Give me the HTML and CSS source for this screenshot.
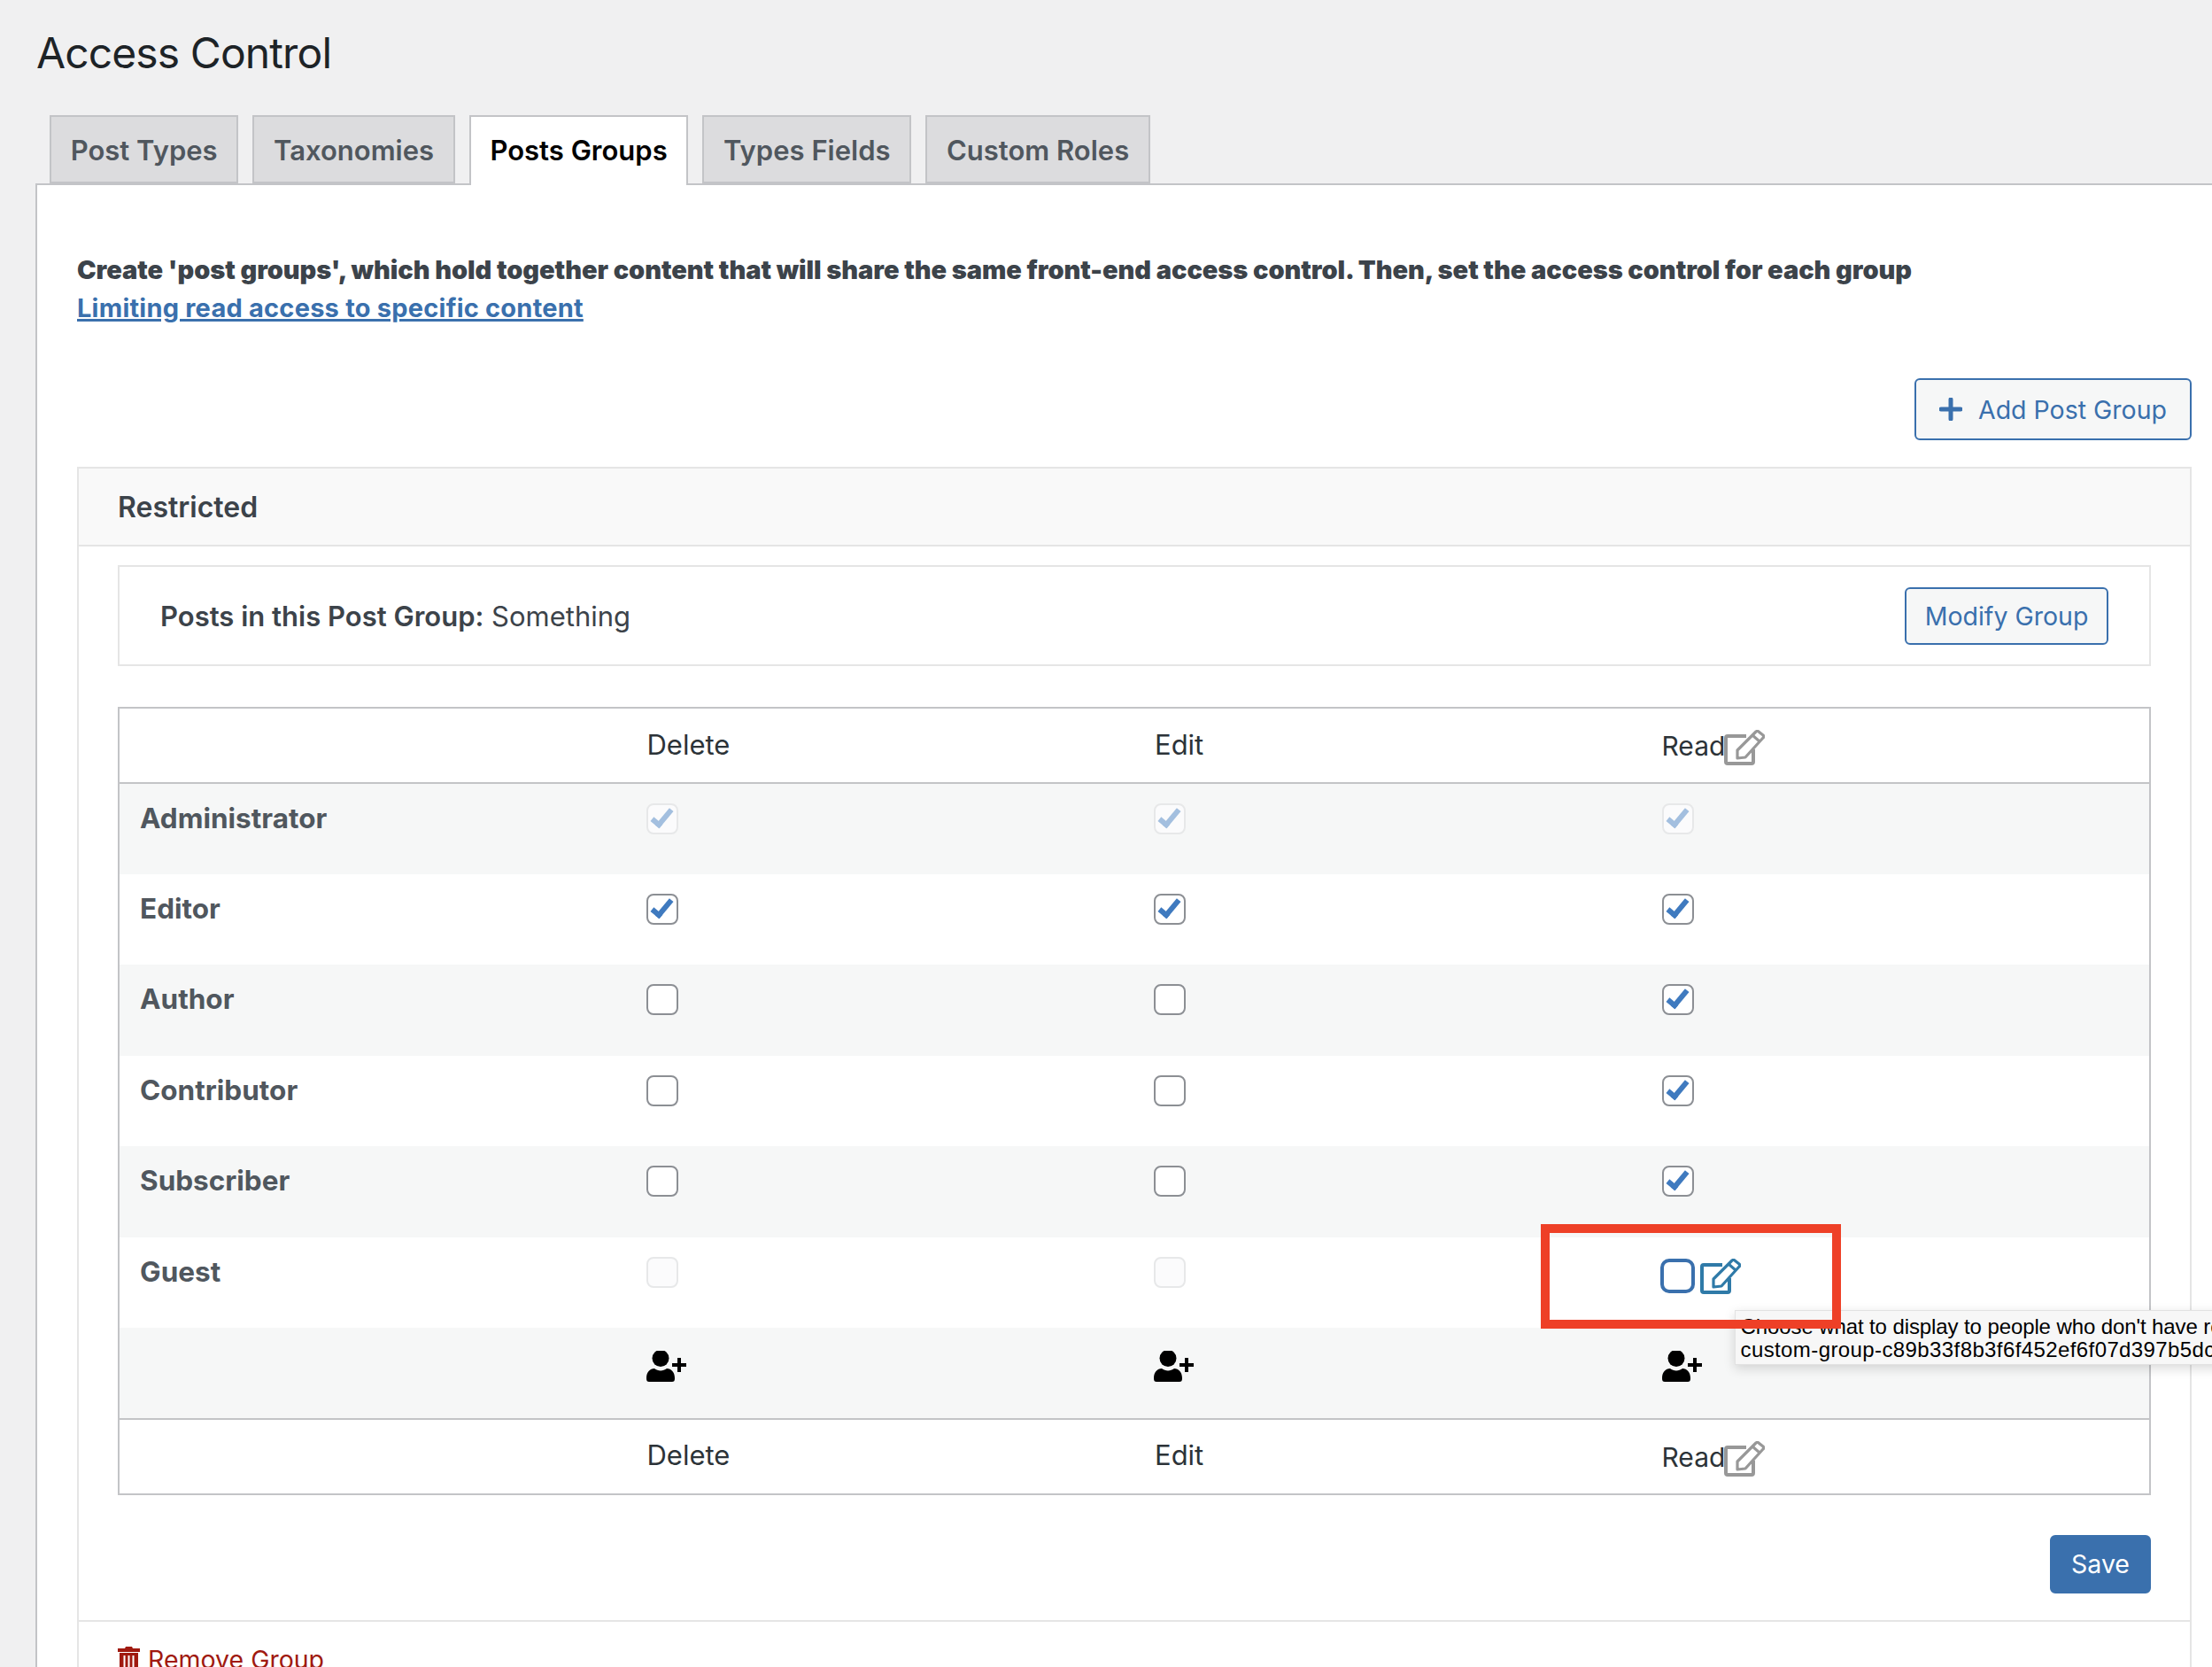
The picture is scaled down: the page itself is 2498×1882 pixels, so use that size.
FILE: index.html
```html
<!DOCTYPE html>
<html lang="en">

<head>
    <meta charset="UTF-8">
    <title>Access Control</title>
    <link rel="stylesheet" href="styles.css">
</head>

<body>
    <svg class="icon-defs" width="0" height="0">
        <symbol id="pencil" viewBox="0 0 46 40">
            <path d="M25 7H4a2 2 0 0 0-2 2v27a2 2 0 0 0 2 2h27a2 2 0 0 0 2-2V22" fill="none" stroke="currentColor" stroke-width="4" />
            <path d="M39 2l5 4a2 2 0 0 1 0 3L24 31l-9 1 0-9L36 2a2 2 0 0 1 3 0z" fill="none" stroke="currentColor" stroke-width="3.200" stroke-linejoin="round" />
            <path d="M32 6l8 7" stroke="currentColor" stroke-width="3" />
        </symbol>
        <symbol id="user-plus" viewBox="0 0 45 36">
            <circle cx="16" cy="8.500" r="9.500" fill="currentColor" />
            <path d="M0 31c0-7 4-11 9-11 2 1.500 4.500 2.500 7 2.500s5-1 7-2.500c5 0 9 4 9 11 0 3-1 4-3 4H3c-2 0-3-1-3-4z" fill="currentColor" />
            <path d="M37 8v16M29 16h16" stroke="currentColor" stroke-width="4" />
        </symbol>
    </svg>

    <h1>Access Control</h1>

    <div class="tabs">
        <a class="tab">Post Types</a>
        <a class="tab">Taxonomies</a>
        <a class="tab active">Posts Groups</a>
        <a class="tab">Types Fields</a>
        <a class="tab">Custom Roles</a>
    </div>

    <div class="panel">
        <p class="intro">
            <strong>Create 'post groups', which hold together content that will share the same front-end access control. Then, set the access control for each group</strong><br>
            <a class="doc-link" href="#">Limiting read access to specific content</a>
        </p>

        <div class="add-row">
            <button class="btn">
                <svg class="plus" viewBox="0 0 26 26" width="26" height="26"><path d="M13 2v22M2 13h22" stroke="currentColor" stroke-width="5" stroke-linecap="round" /></svg>
                Add Post Group
            </button>
        </div>

        <div class="group">
            <div class="group-title">Restricted</div>
            <div class="group-body">
                <div class="posts-box">
                    <span><strong>Posts in this Post Group:</strong> Something</span>
                    <button class="btn">Modify Group</button>
                </div>

                <table class="roles">
                    <thead>
                        <tr>
                            <th></th>
                            <th>Delete</th>
                            <th>Edit</th>
                            <th><span class="read">Read<svg class="pencil"><use href="#pencil" /></svg></span></th>
                        </tr>
                    </thead>
                    <tbody>
                        <tr>
                            <td class="role">Administrator</td>
                            <td><span class="check on off"></span></td>
                            <td><span class="check on off"></span></td>
                            <td><span class="check on off"></span></td>
                        </tr>
                        <tr>
                            <td class="role">Editor</td>
                            <td><span class="check on"></span></td>
                            <td><span class="check on"></span></td>
                            <td><span class="check on"></span></td>
                        </tr>
                        <tr>
                            <td class="role">Author</td>
                            <td><span class="check"></span></td>
                            <td><span class="check"></span></td>
                            <td><span class="check on"></span></td>
                        </tr>
                        <tr>
                            <td class="role">Contributor</td>
                            <td><span class="check"></span></td>
                            <td><span class="check"></span></td>
                            <td><span class="check on"></span></td>
                        </tr>
                        <tr>
                            <td class="role">Subscriber</td>
                            <td><span class="check"></span></td>
                            <td><span class="check"></span></td>
                            <td><span class="check on"></span></td>
                        </tr>
                        <tr>
                            <td class="role">Guest</td>
                            <td><span class="check off"></span></td>
                            <td><span class="check off"></span></td>
                            <td>
                                <span class="guest-read">
                                    <span class="check focus"></span>
                                    <svg class="pencil blue"><use href="#pencil" /></svg>
                                </span>
                                <span class="highlight"></span>
                                <div class="tooltip">Choose what to display to people who don't have read access<br><span class="tooltip-id">custom-group-c89b33f8b3f6f452ef6f07d397b5dc</span></div>
                            </td>
                        </tr>
                        <tr>
                            <td></td>
                            <td><svg class="user-plus"><use href="#user-plus" /></svg></td>
                            <td><svg class="user-plus"><use href="#user-plus" /></svg></td>
                            <td><svg class="user-plus"><use href="#user-plus" /></svg></td>
                        </tr>
                    </tbody>
                    <tfoot>
                        <tr>
                            <th></th>
                            <th>Delete</th>
                            <th>Edit</th>
                            <th><span class="read">Read<svg class="pencil"><use href="#pencil" /></svg></span></th>
                        </tr>
                    </tfoot>
                </table>

                <div class="save-row">
                    <button class="btn primary">Save</button>
                </div>
            </div>
            <div class="group-footer">
                <a class="remove" href="#">
                    <svg class="trash" viewBox="0 0 25 28" width="25" height="28">
                        <path d="M9 0h7l1 2h8v4H0V2h8z" fill="currentColor" />
                        <path d="M2 7h21v21H2z" fill="currentColor" />
                        <path d="M7.500 10v18M12.500 10v18M17.500 10v18" stroke="#fff" stroke-width="2" />
                    </svg>
                    Remove Group
                </a>
            </div>
        </div>
    </div>
</body>

</html>
```

FILE: styles.css
```css
html {
    height: 1882px;
    overflow: hidden;
}

body {
    font-family: Inter, "Liberation Sans", sans-serif;
    font-size: 29px;
    color: #3c434a;
    background-color: #f0f0f1;
    margin: 0;
}

.icon-defs {
    position: absolute;
}

h1 {
    font-size: 48px;
    font-weight: 400;
    line-height: 60px;
    color: #1d2327;
    margin: 0;
    padding: 30px 0 0 41px;
    height: 100px;
    box-sizing: border-box;
    letter-spacing: -0.9px;
}

.tabs {
    display: flex;
    gap: 16px;
    margin-top: 30px;
    padding-left: 56px;
    height: 77px;
}

.tab {
    font-size: 31px;
    font-weight: 600;
    line-height: 75px;
    padding: 0 21.700px;
    height: 77px;
    box-sizing: border-box;
    color: #50575e;
    background: #dcdcde;
    border: 2px solid #c3c4c7;
}

.tab.active {
    color: #000;
    background: #fff;
    border-bottom: none;
    height: 79px;
    position: relative;
    z-index: 1;
}

.panel {
    background: #fff;
    margin-left: 40px;
    border-top: 2px solid #c3c4c7;
    border-left: 2px solid #c3c4c7;
    padding: 0 23px 0 45px;
    height: 1700px;
}

.intro {
    margin: 74px 0 0;
    line-height: 43px;
    font-weight: 700;
    letter-spacing: -0.06px;
}

.doc-link {
    color: #3a70ad;
    text-decoration: underline;
    text-decoration-thickness: 3px;
    letter-spacing: 0.22px;
}

.add-row {
    display: flex;
    justify-content: flex-end;
    margin-top: 58px;
}

.btn {
    font-family: inherit;
    font-size: 28.500px;
    color: #3a70ad;
    background: #f6f7f7;
    border: 2px solid #3a70ad;
    border-radius: 6px;
    padding: 0;
    width: 230px;
    height: 65px;
    cursor: pointer;
}

.add-row .btn {
    height: 70px;
    width: 313px;
    display: flex;
    align-items: center;
    justify-content: center;
    gap: 18px;
}

.group {
    margin-top: 30px;
    border: 2px solid #e5e5e5;
}

.group-title {
    height: 86px;
    line-height: 88px;
    padding-left: 44px;
    font-size: 32px;
    font-weight: 600;
    color: #3c434a;
    background: #f9f9f9;
    border-bottom: 2px solid #e5e5e5;
}

.group-body {
    padding: 21px 44px 30px;
}

.posts-box {
    display: flex;
    justify-content: space-between;
    align-items: center;
    height: 114px;
    box-sizing: border-box;
    padding: 0 46px;
    border: 2px solid #e5e5e5;
    font-size: 31px;
}

.posts-box strong {
    font-weight: 600;
}

.roles {
    width: 100%;
    table-layout: fixed;
    border-collapse: collapse;
    margin-top: 46px;
    border: 2px solid #c3c4c7;
}

.roles th {
    font-size: 31px;
    font-weight: 400;
    text-align: left;
    color: #2c3338;
    height: 85px;
    padding: 0 22px 3px 23px;
    box-sizing: border-box;
}

.roles th .read {
    margin: 4px 0 0 -1px;
    font-size: 30px;
}

.roles thead th {
    border-bottom: 2px solid #c3c4c7;
}

.roles tfoot th {
    border-top: 2px solid #c3c4c7;
}

.roles td {
    height: 102.500px;
    box-sizing: border-box;
    padding: 22px 22px 0;
    vertical-align: top;
    position: relative;
}

.roles tbody tr:nth-child(odd) {
    background: #f6f7f7;
}

.roles td.role {
    font-size: 31.500px;
    font-weight: 700;
    color: #50575e;
    line-height: 34px;
    padding-left: 23px;
}

.read {
    display: inline-flex;
    align-items: center;
    height: 40px;
}

.pencil {
    width: 46px;
    height: 40px;
    color: #989898;
    margin: 4px 0 0 -1px;
}

.pencil.blue {
    color: #2f7aa8;
    margin: 0;
}

.check {
    display: block;
    width: 36px;
    height: 35px;
    box-sizing: border-box;
    border: 2px solid #8c8f94;
    border-radius: 8px;
    background: #fff;
    position: relative;
}

.check.on::after {
    content: "";
    position: absolute;
    left: 9px;
    top: 0;
    width: 13px;
    height: 25px;
    box-sizing: border-box;
    border: solid #3f7abf;
    border-width: 0 6px 6px 0;
    transform: rotate(40deg);
}

.check.off {
    border-color: #e7e8e9;
    background: #fbfbfc;
}

.check.on.off::after {
    border-color: #a3bfdf;
}

.check.focus {
    width: 39px;
    height: 39px;
    border: 4px solid #3a70ad;
    border-radius: 10px;
    flex-shrink: 0;
}

.guest-read {
    display: flex;
    gap: 6px;
    margin: 2px 0 0 -2px;
}

.highlight {
    position: absolute;
    left: -115px;
    top: -15px;
    width: 339px;
    height: 118px;
    box-sizing: border-box;
    border: 10px solid #ee4027;
    z-index: 3;
}

.tooltip {
    position: absolute;
    left: 104px;
    top: 82px;
    z-index: 2;
    white-space: nowrap;
    font-family: "Liberation Sans", sans-serif;
    font-size: 24px;
    line-height: 26px;
    letter-spacing: -0.1px;
    color: #000;
    background: #f7f7f7;
    padding: 5px 6px;
    height: 62px;
    box-sizing: border-box;
    border: 1px solid #e2e2e2;
    box-shadow: 0 4px 12px rgba(0, 0, 0, 0.15);
}

.tooltip-id {
    letter-spacing: 0.4px;
}

.user-plus {
    width: 45px;
    height: 36px;
    color: #000;
    display: block;
    margin-top: 4px;
}

.save-row {
    display: flex;
    justify-content: flex-end;
    margin-top: 45px;
}

.btn.primary {
    color: #fff;
    background: #3a70ad;
    height: 66px;
    width: 114px;
}

.group-footer {
    border-top: 2px solid #e5e5e5;
    padding: 25px 44px;
    font-size: 28.500px;
}

.remove {
    color: #a01a10;
    text-decoration: none;
    display: flex;
    align-items: center;
    gap: 9px;
}
```
